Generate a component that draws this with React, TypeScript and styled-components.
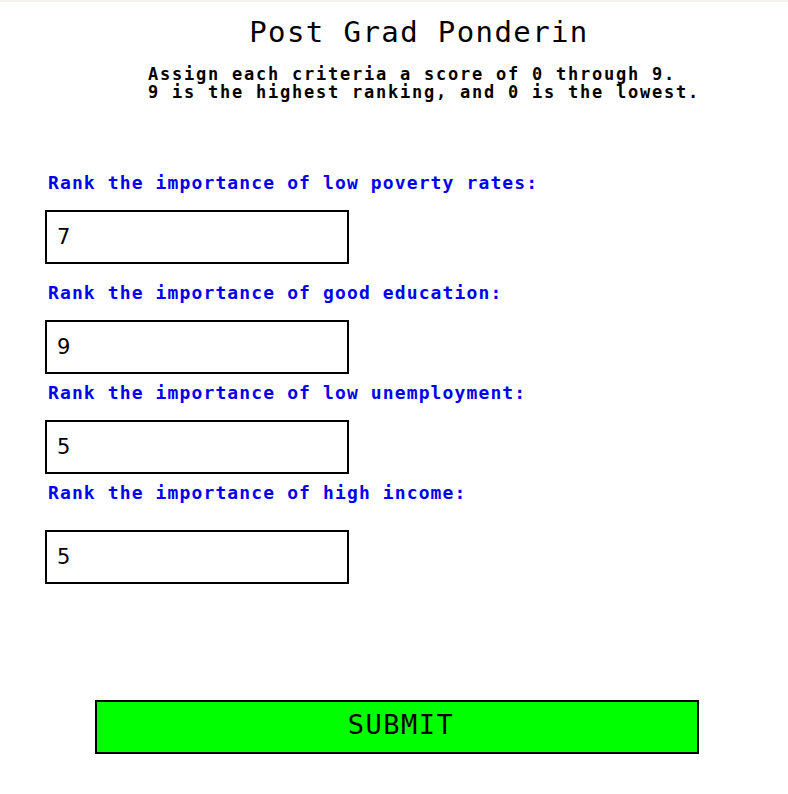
import React from "react";
import styled, { createGlobalStyle } from "styled-components";

const GlobalStyle = createGlobalStyle`
  html, body {
    margin: 0;
    padding: 0;
    background: #ffffff;
  }
  * { box-sizing: border-box; }
`;

const Page = styled.div`
  width: 788px;
  min-height: 794px;
  display: flex;
  flex-direction: column;
  font-family: "DejaVu Sans Mono", monospace;
`;

const TopStrip = styled.div`
  height: 2px;
  background: #f5f0ee;
`;

const Header = styled.header`
  padding-left: 48px;
  text-align: center;
  display: flex;
  flex-direction: column;
  align-items: center;
`;

const Title = styled.h1`
  margin: 13px 0 0;
  padding-left: 2px;
  font-family: "DejaVu Sans Mono", monospace;
  font-weight: normal;
  font-size: 29px;
  line-height: 34px;
  letter-spacing: 1.4px;
  color: #000;
`;

const Subtitle = styled.p`
  margin: 16px 0 0;
  padding-left: 12px;
  text-align: left;
  font-family: "DejaVu Sans Mono", monospace;
  font-weight: bold;
  font-size: 17px;
  line-height: 18px;
  letter-spacing: 1.77px;
  color: #000;
  white-space: pre;
`;

const Form = styled.form`
  display: flex;
  flex-direction: column;
  padding-left: 45px;
  margin-top: 72px;
`;

const Field = styled.div<{ $top: number; $gap: number }>`
  display: flex;
  flex-direction: column;
  align-items: flex-start;
  margin-top: ${(p) => p.$top}px;
  gap: ${(p) => p.$gap}px;
`;

const Label = styled.label`
  margin-left: 3px;
  font-family: "DejaVu Sans Mono", monospace;
  font-weight: bold;
  font-size: 18px;
  line-height: 20px;
  letter-spacing: 1.12px;
  color: #0000ee;
`;

const ScoreInput = styled.input`
  width: 304px;
  height: 54px;
  border: 2px solid #000;
  border-radius: 0;
  padding: 0 0 0 10px;
  margin: 0;
  background: #fff;
  font-family: "DejaVu Sans", sans-serif;
  font-size: 21px;
  color: #000;
  outline: none;
`;

const SubmitRow = styled.div`
  display: flex;
  padding-left: 95px;
  margin-top: 116px;
`;

const SubmitButton = styled.button`
  width: 604px;
  height: 54px;
  border: 2px solid #000;
  border-radius: 0;
  background: #00ff00;
  padding: 0 0 5px 8px;
  font-family: "DejaVu Sans Mono", monospace;
  font-size: 27px;
  line-height: 30px;
  letter-spacing: 1.5px;
  color: #000;
  cursor: pointer;
`;

const fields = [
  { label: "Rank the importance of low poverty rates:", value: "7", top: 0, gap: 17 },
  { label: "Rank the importance of good education:", value: "9", top: 19, gap: 17 },
  { label: "Rank the importance of low unemployment:", value: "5", top: 9, gap: 17 },
  { label: "Rank the importance of high income:", value: "5", top: 9, gap: 27 },
];

export default function App() {
  return (
    <>
      <GlobalStyle />
      <Page>
        <TopStrip />
        <Header>
          <Title>Post Grad Ponderin</Title>
          <Subtitle>
            {"Assign each criteria a score of 0 through 9.\n9 is the highest ranking, and 0 is the lowest."}
          </Subtitle>
        </Header>
        <Form onSubmit={(e) => e.preventDefault()}>
          {fields.map((f, i) => (
            <Field key={i} $top={f.top} $gap={f.gap}>
              <Label htmlFor={`score-${i}`}>{f.label}</Label>
              <ScoreInput id={`score-${i}`} type="text" defaultValue={f.value} />
            </Field>
          ))}
        </Form>
        <SubmitRow>
          <SubmitButton type="button">SUBMIT</SubmitButton>
        </SubmitRow>
      </Page>
    </>
  );
}
